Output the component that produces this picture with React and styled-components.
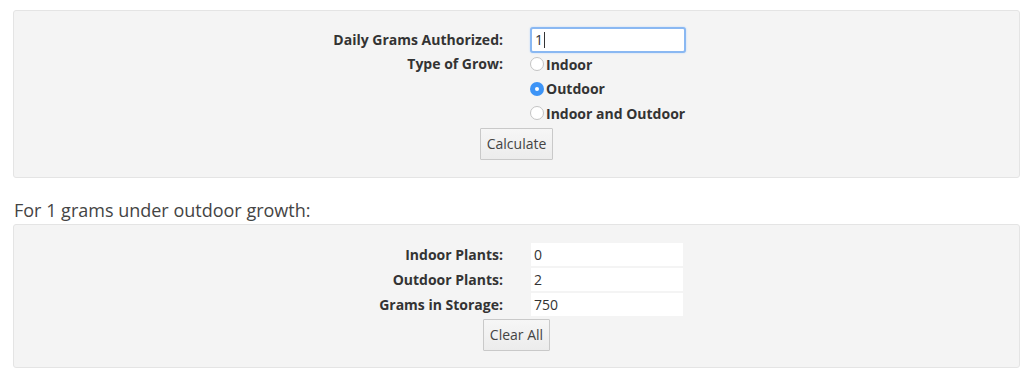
import React from "react";
import styled, { createGlobalStyle } from "styled-components";

const GlobalStyle = createGlobalStyle`
  body {
    margin: 0;
    background: #fff;
    font-family: "Open Sans", "Noto Sans", sans-serif;
    color: #333;
  }
`;

const Page = styled.div`
  padding: 10px 4px 0 13px;
`;

const Panel = styled.div`
  background: #f4f4f4;
  border: 1px solid #e4e4e4;
  border-radius: 3px;
  padding: ${({pad}) => pad};
  display: flex;
  flex-direction: column;
  align-items: center;
`;

const FormGrid = styled.div`
  width: 100%;
  display: grid;
  grid-template-columns: 1fr 1fr;
  column-gap: 27px;
  align-items: center;
`;

const Label = styled.div`
  justify-self: end;
  font-size: 14px;
  font-weight: 700;
  color: #333;
  height: ${({h}) => h}px;
  line-height: ${({h}) => h}px;
  white-space: nowrap;
`;

const Cell = styled.div`
  height: ${({h}) => h}px;
  display: flex;
  align-items: center;
`;

const TextInput = styled.input`
  box-sizing: border-box;
  width: 156px;
  height: 26px;
  border: 2px solid #8ab8f2;
  border-radius: 3px;
  background: #fff;
  padding: 0 3px;
  font-family: "Open Sans", "Noto Sans", sans-serif;
  font-size: 14px;
  color: #333;
  outline: none;
  box-shadow: 0 0 2px #b8d6fa;
`;

const OutputBox = styled.div`
  box-sizing: border-box;
  width: 152px;
  height: 23px;
  background: #fff;
  margin-left: 1px;
  padding: 0 3px;
  display: flex;
  align-items: center;
  font-size: 14px;
  color: #333;
`;

const RadioLabel = styled.label`
  display: flex;
  align-items: center;
  font-size: 14px;
  font-weight: 700;
  color: #333;
  white-space: nowrap;
`;

const RadioDot = styled.span`
  box-sizing: border-box;
  width: 14px;
  height: 14px;
  border-radius: 50%;
  margin-right: 2px;
  border: ${({on}) => (on ? "none" : "1px solid #c4c4c4")};
  background: ${({on}) => (on ? "#3d94f6" : "#fff")};
  display: flex;
  align-items: center;
  justify-content: center;

  &::after {
    content: "";
    width: 4px;
    height: 4px;
    border-radius: 50%;
    background: #fff;
    display: ${({on}) => (on ? "block" : "none")};
  }
`;

const Button = styled.button`
  box-sizing: border-box;
  height: 32px;
  padding: 0 6px;
  border: 1px solid #c9c9c9;
  border-radius: 1px;
  background: linear-gradient(#f6f6f6, #ececec);
  font-family: "Open Sans", "Noto Sans", sans-serif;
  font-size: 14px;
  color: #444;
  margin-top: 2px;
`;

const Heading = styled.div`
  margin: 20px 0 0 1px;
  height: 26px;
  font-size: 18px;
  color: #444;
  line-height: 24px;
`;

const Caret = styled.span`
  display: inline-block;
  width: 1px;
  height: 16px;
  background: #333;
  margin-left: 1px;
`;

const CaretWrap = styled.div`
  position: relative;
  display: flex;
  align-items: center;

  ${Caret} {
    position: absolute;
    left: 13px;
    top: 5px;
  }
`;

const grows = ["Indoor", "Outdoor", "Indoor and Outdoor"];
const results = [
  ["Indoor Plants:", "0"],
  ["Outdoor Plants:", "2"],
  ["Grams in Storage:", "750"],
];

export default function App() {
  return (
    <Page>
      <GlobalStyle />
      <Panel pad="16px 0 17px">
        <FormGrid>
          <Label h={25}>Daily Grams Authorized:</Label>
          <Cell h={25}>
            <CaretWrap>
              <TextInput defaultValue="1" readOnly />
              <Caret />
            </CaretWrap>
          </Cell>
          {grows.map((g, i) => (
            <React.Fragment key={g}>
              <Label h={24.5}>{i === 0 ? "Type of Grow:" : ""}</Label>
              <Cell h={24.5}>
                <RadioLabel>
                  <RadioDot on={g === "Outdoor"} />
                  {g}
                </RadioLabel>
              </Cell>
            </React.Fragment>
          ))}
        </FormGrid>
        <Button>Calculate</Button>
      </Panel>
      <Heading>For 1 grams under outdoor growth:</Heading>
      <Panel pad="17px 0 16px">
        <FormGrid>
          {results.map(([l, v]) => (
            <React.Fragment key={l}>
              <Label h={25}>{l}</Label>
              <Cell h={25}>
                <OutputBox>{v}</OutputBox>
              </Cell>
            </React.Fragment>
          ))}
        </FormGrid>
        <Button>Clear All</Button>
      </Panel>
    </Page>
  );
}
